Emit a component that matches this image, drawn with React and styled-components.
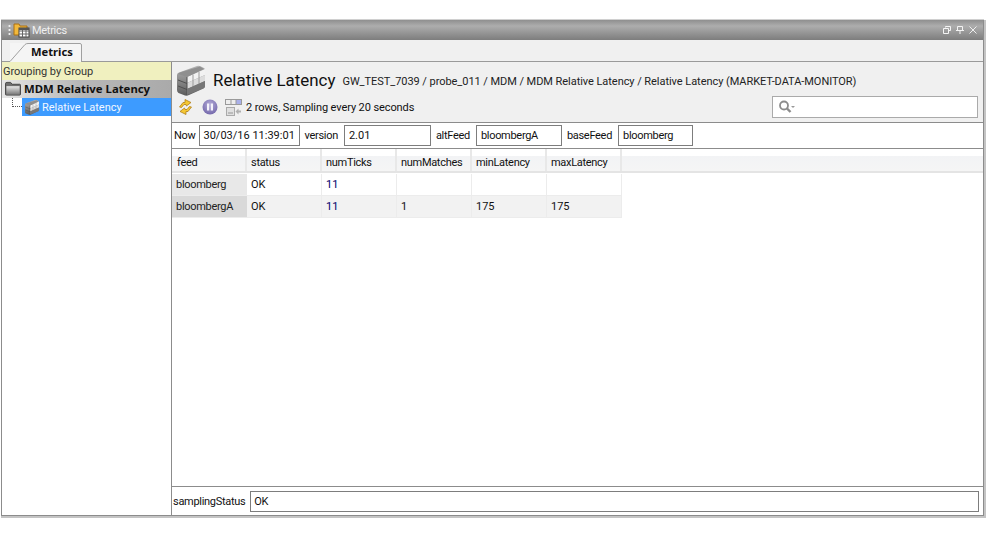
import styled, { createGlobalStyle } from 'styled-components';

const GlobalStyle = createGlobalStyle`
  html, body { margin: 0; padding: 0; background: #fff; }
  body {
    font-family: Roboto, "Noto Sans", sans-serif;
    font-size: 11px;
    letter-spacing: -0.3px;
    color: #111;
  }
  * { box-sizing: border-box; }
`;

const Page = styled.div`
  width: 986px;
  height: 538px;
  padding: 20px 2px 22px 1px;
  overflow: hidden;
`;
const Window = styled.div`
  height: 496px;
  display: flex;
  flex-direction: column;
  border: 1px solid #8c8c8c;
  border-top: 0;
  box-shadow: 1px 1px 0 1px #c4c4c4, 0 -1px 0 #d0d0d0;
`;
const TitleBar = styled.div`
  height: 20px;
  flex: none;
  display: flex;
  align-items: center;
  padding: 0 6px 0 6px;
  background: linear-gradient(#8f8f8f, #adadad 30%, #7d7d7d);
  color: #f0f0f0;
`;
const Grip = styled.div`
  width: 3px;
  height: 12px;
  margin-right: 2px;
  background: radial-gradient(circle at center, #eee 1px, transparent 1.2px) 0 0 / 3px 4px;
`;
const TitleText = styled.span`
  margin-left: 2px;
  font-size: 11px;
`;
const WinButtons = styled.div`
  margin-left: auto;
  display: flex;
  gap: 5px;
  align-items: center;
`;
const TabStrip = styled.div`
  height: 22px;
  flex: none;
  display: flex;
  align-items: flex-end;
  padding-left: 8px;
  background: #f0f0f0;
  border-bottom: 1px solid #9a9a9a;
`;
const Tab = styled.div`
  position: relative;
  height: 19px;
  width: 72px;
  margin-bottom: -1px;
  padding: 1px 0 0 21px;
  font-family: "Noto Sans", sans-serif;
  font-weight: 700;
  font-size: 11.2px;
  letter-spacing: 0;
  background: #f5f5f5;
`;
const TabEdge = styled.svg`
  position: absolute;
  left: 0;
  top: 0;
`;
const Body = styled.div`
  flex: 1;
  min-height: 0;
  display: flex;
  background: #fff;
`;
const Sidebar = styled.aside`
  width: 170px;
  flex: none;
  border-right: 1px solid #8c8c8c;
`;
const GroupingRow = styled.div`
  height: 18px;
  line-height: 19px;
  padding-left: 1px;
  letter-spacing: -0.05px;
  background: #f0f0bf;
  color: #333;
`;
const GroupRow = styled.div`
  height: 18px;
  display: flex;
  align-items: center;
  padding: 0 0 2px 3px;
  gap: 3px;
  font-family: "Noto Sans", sans-serif;
  font-weight: 700;
  font-size: 11.35px;
  letter-spacing: 0;
  background: linear-gradient(90deg, #e6e6e6 0, #b8b8b8 45%, #aaa);
  color: #111;
`;
const TreeRow = styled.div`
  height: 18px;
  display: flex;
  align-items: center;
  padding-left: 10px;
`;
const TreeConnector = styled.div`
  width: 10px;
  height: 9px;
  margin-bottom: 9px;
  border-left: 1px dotted #555;
  border-bottom: 1px dotted #555;
`;
const TreeSelected = styled.div`
  flex: 1;
  height: 18px;
  display: flex;
  align-items: center;
  gap: 2px;
  padding-left: 2px;
  letter-spacing: 0;
  background: #3d9bff;
  color: #f2f8ff;
`;
const Main = styled.main`
  flex: 1;
  min-width: 0;
  display: flex;
  flex-direction: column;
`;
const Header = styled.header`
  height: 61px;
  flex: none;
  display: flex;
  flex-direction: column;
  padding: 1px 5px 0 3px;
  background: #f0f0f0;
  border-bottom: 1px solid #8c8c8c;
`;
const HeadingRow = styled.div`
  height: 33px;
  display: flex;
  align-items: center;
  gap: 6px;
`;
const Heading = styled.h1`
  margin: 1px 0 0;
  font-size: 16.9px;
  font-weight: 400;
  letter-spacing: 0;
  color: #111;
`;
const Breadcrumb = styled.span`
  margin: 3px 0 0 1px;
  font-size: 11px;
  letter-spacing: -0.05px;
  color: #222;
`;
const ToolRow = styled.div`
  display: flex;
  align-items: center;
  height: 22px;
  padding-left: 3px;
`;
const ToolIcon = styled.span`
  display: flex;
  margin-right: ${p => p.$gap}px;
`;
const ToolStatus = styled.span`
  font-size: 11px;
  letter-spacing: -0.1px;
`;
const Search = styled.div`
  margin: 0 0 0 auto;
  width: 206px;
  height: 22px;
  display: flex;
  align-items: center;
  padding-left: 5px;
  background: #fff;
  border: 1px solid #aaa;
`;
const ParamRow = styled.div`
  height: 26px;
  flex: none;
  display: flex;
  align-items: center;
  padding-left: 2px;
  background: #fff;
  border-bottom: 1px solid #8c8c8c;
`;
const ParamLabel = styled.span`
  margin: 0 ${p => p.$after}px 0 ${p => p.$gap || 0}px;
`;
const ParamValue = styled.div`
  width: ${p => p.$w}px;
  height: 21px;
  line-height: 19px;
  padding-left: ${p => (p.$grow ? 3 : 4)}px;
  border: 1px solid #7d7d7d;
  background: #fff;
  letter-spacing: ${p => (p.$plain ? 0 : -0.3)}px;
  flex: ${p => (p.$grow ? 1 : 'none')};
`;
const TableArea = styled.div`
  flex: 1;
  min-height: 0;
  background: #fff;
`;
const HeadRow = styled.div`
  display: flex;
  height: 24px;
  background: linear-gradient(#fff 0, #fff 30%, #f2f3f5 31%, #f5f5f5);
  border-bottom: 2px solid #e4e4e4;
`;
const HeadCell = styled.div`
  width: ${p => p.$w}px;
  flex: none;
  padding: 7px 0 0 4px;
  border-right: 2px solid #e8e8e8;
  &:first-child { padding-left: 5px; }
`;
const HeadFill = styled.div`
  flex: 1;
`;
const Row = styled.div`
  display: flex;
  height: 22px;
  margin-top: ${p => (p.$first ? 1 : 0)}px;
  width: 450px;
  background: ${p => (p.$alt ? '#f2f2f2' : '#fff')};
  border-bottom: 1px solid #ececec;
`;
const KeyCell = styled.div`
  width: 75px;
  flex: none;
  padding: 4px 0 0 4px;
  background: ${p => (p.$alt ? '#d9d9d9' : '#e8e8e8')};
  color: #222;
`;
const Cell = styled.div`
  width: ${p => p.$w}px;
  flex: none;
  padding: 4px 0 0 4px;
  border-right: 1px solid #ececec;
  letter-spacing: 0;
  color: ${p => (p.$num ? '#00006a' : '#111')};
`;
const Footer = styled.footer`
  height: 29px;
  flex: none;
  display: flex;
  align-items: center;
  padding: 0 4px 0 1px;
  border-top: 1px solid #8c8c8c;
`;

const FolderIcon = () => (
  <svg width="16" height="15" viewBox="0 0 17 15">
    <defs>
      <linearGradient id="folderFace" x1="0" y1="0" x2="0" y2="1">
        <stop offset="0" stopColor="#e8e8e8" />
        <stop offset="1" stopColor="#777" />
      </linearGradient>
    </defs>
    <path d="M.5 2.500Q.5 1 2 1h4l1.500 2h8q1 0 1 1v9.500q0 1-1 1H1.500q-1 0-1-1z" fill="#6e6e6e" stroke="#444" />
    <rect x="1.500" y="5" width="14" height="9" fill="url(#folderFace)" />
  </svg>
);

const TitleIcon = () => (
  <svg width="17" height="16" viewBox="0 0 17 16">
    <path d="M1 2h5l1 2h7v9H1z" fill="#f2b93b" stroke="#a96f12" />
    <rect x="6" y="6" width="10" height="9" fill="#fff" stroke="#444" />
    <path d="M6 9h10M6 12h10M9.500 6v9M13 6v9" stroke="#666" strokeWidth="1" />
    <rect x="6" y="6" width="10" height="2" fill="#555" />
  </svg>
);

const TableStackIcon = ({ size = 32, id = 'big' }) => (
  <svg width={size} height={size} viewBox="0 0 32 32">
    <defs>
      <linearGradient id={`${id}Side`} x1="0" y1="0" x2="0" y2="1">
        <stop offset="0" stopColor="#b5b5b5" />
        <stop offset="1" stopColor="#5c5c5c" />
      </linearGradient>
    </defs>
    <path d="M2 11Q2 9 4 8.500L22 2q2-.5 4 .5l3 1.500q1 .5 1 2V22q0 1.500-1.500 2.500L14 31q-2 1-4 .5L3.500 29Q2 28 2 26z" fill={`url(#${id}Side)`} />
    <path d="M12 13L30 5v6l-18 8z" fill="#f2f2f2" />
    <path d="M12 19l18-8v6l-18 8z" fill="#dcdcdc" />
    <path d="M3 10l9 3L29 5l-4-2.500L5 8.500z" fill="#8f8f8f" />
    <path d="M18 10.500V23M24 8v12.500" stroke="#9a9a9a" />
    <path d="M3 16l9 3.500M3 22l9 3.500M12 13v18" stroke="#4f4f4f" fill="none" />
    <path d="M12 25l18-8v5q0 1-1 2l-17 7z" fill="#777" />
  </svg>
);

const RefreshIcon = () => (
  <svg width="15" height="16" viewBox="0 0 15 16">
    <g fill="#f5c834" stroke="#a8740f" strokeWidth=".7" strokeLinejoin="round">
      <path d="M1.500 8L5 3.500H7V.5L13 3.500 8.500 7 8 5.500H6L3.500 8.500z" />
      <path d="M13.500 8L10 12.500H8V15.500L2 12.500 6.500 9 7 10.500H9L11.500 7.500z" />
    </g>
  </svg>
);

const PauseIcon = () => (
  <svg width="16" height="16" viewBox="0 0 16 16">
    <defs>
      <radialGradient id="pauseFill" cx="50%" cy="35%" r="70%">
        <stop offset="0" stopColor="#b5add8" />
        <stop offset="1" stopColor="#6f63a8" />
      </radialGradient>
    </defs>
    <circle cx="8" cy="8" r="7.500" fill="url(#pauseFill)" />
    <rect x="5" y="4.500" width="2.200" height="7" fill="#f4f2fb" />
    <rect x="8.800" y="4.500" width="2.200" height="7" fill="#f4f2fb" />
  </svg>
);

const ColumnsIcon = () => (
  <svg width="17" height="17" viewBox="0 0 17 17">
    <rect x="0.500" y="0.500" width="16" height="5" fill="#eee" stroke="#9a9a9a" />
    <rect x="11" y="1" width="5" height="4" fill="#aab0ea" />
    <path d="M6 1v4M11 1v4" stroke="#9a9a9a" />
    <rect x="1.500" y="8.500" width="8" height="8" fill="#e0e0e0" stroke="#aaa" />
    <rect x="3" y="13" width="5" height="2" fill="#bbb" />
    <path d="M10.500 12.500l3-3v2h2.500v2H13.500v2z" fill="#b0b0b0" />
  </svg>
);

const SearchIcon = () => (
  <svg width="18" height="14" viewBox="0 0 18 14">
    <circle cx="6" cy="5.500" r="4" fill="none" stroke="#8c8c8c" strokeWidth="1.800" />
    <path d="M9 8.500l3.500 3.500" stroke="#8c8c8c" strokeWidth="2.400" />
    <path d="M13 6h4l-2 2z" fill="#999" />
  </svg>
);

const WinIcons = () => (
  <WinButtons>
    <svg width="8" height="8" viewBox="0 0 8 8">
      <path d="M2.500 1.500V.5h5v4H6M.5 2.500h5v5h-5z" fill="none" stroke="#f4f4f4" />
    </svg>
    <svg width="8" height="8" viewBox="0 0 8 8">
      <path d="M1.500 .5h5v4h-5zM0 4.500h8M4 5v3" fill="none" stroke="#f4f4f4" />
    </svg>
    <svg width="8" height="8" viewBox="0 0 8 8">
      <path d="M.5 .5l7 7M7.500 .5l-7 7" fill="none" stroke="#eee" />
    </svg>
  </WinButtons>
);

const columns = [
  { name: 'feed', w: 75 },
  { name: 'status', w: 75 },
  { name: 'numTicks', w: 75 },
  { name: 'numMatches', w: 75 },
  { name: 'minLatency', w: 75 },
  { name: 'maxLatency', w: 75 },
];

const rows = [
  { feed: 'bloomberg', status: 'OK', numTicks: '11', numMatches: '', minLatency: '', maxLatency: '' },
  { feed: 'bloombergA', status: 'OK', numTicks: '11', numMatches: '1', minLatency: '175', maxLatency: '175' },
];

export default function App() {
  return (
    <Page>
      <GlobalStyle />
      <Window>
        <TitleBar>
          <Grip />
          <TitleIcon />
          <TitleText>Metrics</TitleText>
          <WinIcons />
        </TitleBar>
        <TabStrip>
          <Tab>
            <TabEdge width="72" height="19" viewBox="0 0 72 19">
              <path d="M0 18.500L15 1.500Q16 .5 18 .5H70q1.500 0 1.500 1.500V19" fill="none" stroke="#a0a0a0" />
            </TabEdge>
            Metrics
          </Tab>
        </TabStrip>
        <Body>
          <Sidebar>
            <GroupingRow>Grouping by Group</GroupingRow>
            <GroupRow>
              <FolderIcon />
              MDM Relative Latency
            </GroupRow>
            <TreeRow>
              <TreeConnector />
              <TreeSelected>
                <TableStackIcon size={16} id="small" />
                Relative Latency
              </TreeSelected>
            </TreeRow>
          </Sidebar>
          <Main>
            <Header>
              <HeadingRow>
                <TableStackIcon />
                <Heading>Relative Latency</Heading>
                <Breadcrumb>GW_TEST_7039 / probe_011 / MDM / MDM Relative Latency / Relative Latency (MARKET-DATA-MONITOR)</Breadcrumb>
              </HeadingRow>
              <ToolRow>
                <ToolIcon $gap={9}><RefreshIcon /></ToolIcon>
                <ToolIcon $gap={7}><PauseIcon /></ToolIcon>
                <ToolIcon $gap={4}><ColumnsIcon /></ToolIcon>
                <ToolStatus>2 rows, Sampling every 20 seconds</ToolStatus>
                <Search>
                  <SearchIcon />
                </Search>
              </ToolRow>
            </Header>
            <ParamRow>
              <ParamLabel $after={3}>Now</ParamLabel>
              <ParamValue $w={101} $plain>30/03/16 11:39:01</ParamValue>
              <ParamLabel $gap={5} $after={6}>version</ParamLabel>
              <ParamValue $w={87} $plain>2.01</ParamValue>
              <ParamLabel $gap={5} $after={6}>altFeed</ParamLabel>
              <ParamValue $w={86}>bloombergA</ParamValue>
              <ParamLabel $gap={5} $after={6}>baseFeed</ParamLabel>
              <ParamValue $w={75}>bloomberg</ParamValue>
            </ParamRow>
            <TableArea>
              <HeadRow>
                {columns.map(c => (
                  <HeadCell key={c.name} $w={c.w}>{c.name}</HeadCell>
                ))}
                <HeadFill />
              </HeadRow>
              {rows.map((r, i) => (
                <Row key={r.feed} $alt={i === 1} $first={i === 0}>
                  <KeyCell $alt={i === 1}>{r.feed}</KeyCell>
                  {columns.slice(1).map(c => (
                    <Cell key={c.name} $w={c.w} $num={c.name === 'numTicks'}>{r[c.name]}</Cell>
                  ))}
                </Row>
              ))}
            </TableArea>
            <Footer>
              <ParamLabel $after={5}>samplingStatus</ParamLabel>
              <ParamValue $grow>OK</ParamValue>
            </Footer>
          </Main>
        </Body>
      </Window>
    </Page>
  );
}
